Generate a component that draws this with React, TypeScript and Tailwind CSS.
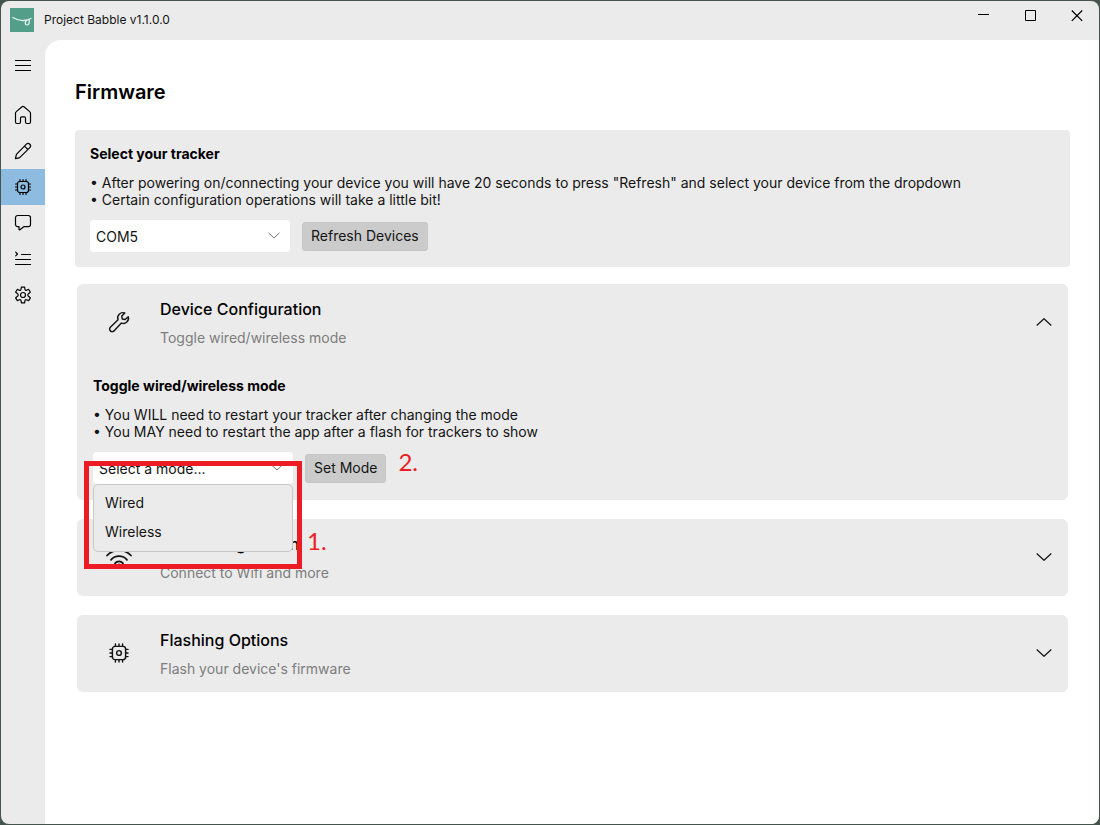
import React, { useState } from 'react'

type IconProps = { className?: string }

const Icon = ({ className = 'size-5', children }: IconProps & { children: React.ReactNode }) => (
  <svg
    viewBox="0 0 20 20"
    className={className}
    fill="none"
    stroke="currentColor"
    strokeWidth="1.2"
    strokeLinecap="round"
    strokeLinejoin="round"
    aria-hidden="true"
  >
    {children}
  </svg>
)

const HomeIcon = () => (
  <Icon>
    <path d="M9 1.7a1.6 1.6 0 0 1 2 0l5.7 4.9c.5.4.8 1 .8 1.7v8.7c0 .9-.6 1.5-1.5 1.5h-2c-.9 0-1.5-.6-1.5-1.5v-3.9c0-.8-.5-1.3-1.3-1.3H8.8c-.8 0-1.3.5-1.3 1.3V17c0 .9-.6 1.5-1.5 1.5H4c-.9 0-1.5-.6-1.5-1.5V8.300c0-.7.3-1.3.8-1.700z" />
  </Icon>
)

const PencilIcon = () => (
  <Icon>
    <path d="M13.4 3.2a2.3 2.3 0 0 1 3.4 3.4L7.2 16.2c-.3.3-.6.5-1 .6l-3.8.9.9-3.8c.1-.4.3-.7.6-1zM11.500 5.100l3.400 3.400" />
  </Icon>
)

const ChipIcon = ({ className }: IconProps) => (
  <Icon className={className}>
    <rect x="4.5" y="4.5" width="11" height="11" rx="2.2" />
    <circle cx="10" cy="10" r="2" />
    <path d="M7 4.500v-2M10 4.500v-2M13 4.500v-2M7 17.500v-2M10 17.500v-2M13 17.500v-2M4.500 7h-2M4.500 10h-2M4.500 13h-2M17.500 7h-2M17.500 10h-2M17.500 13h-2" />
  </Icon>
)

const ChatIcon = () => (
  <Icon>
    <path d="M4.700 2.500h10.600a2.200 2.200 0 0 1 2.200 2.200v6.800a2.200 2.200 0 0 1-2.200 2.200h-4.500l-3.900 3c-.4.300-.9 0-.9-.500v-2.500H4.700a2.200 2.200 0 0 1-2.200-2.200V4.700a2.200 2.200 0 0 1 2.200-2.200z" />
  </Icon>
)

const ConsoleIcon = () => (
  <Icon>
    <path d="M2.700 3.200 4.500 5 2.700 6.800M8.500 5.500h9M2.500 10.500h15M2.500 15.500h15" />
  </Icon>
)

const GearIcon = () => (
  <Icon>
    <path d="M8.400 2.200q1.600-.3 3.200 0l.4 2.200a1 1 0 0 0 1.500.8l2.100-.8q1.200 1.200 1.700 2.800l-1.800 1.500a1.600 1.600 0 0 0 0 2.600l1.800 1.500q-.5 1.600-1.700 2.800l-2.100-.8a1 1 0 0 0-1.500.8l-.4 2.200q-1.600.3-3.200 0L8 15.600a1 1 0 0 0-1.500-.8l-2.100.8q-1.200-1.200-1.700-2.800l1.800-1.500a1.600 1.600 0 0 0 0-2.600L2.700 7.200q.5-1.600 1.700-2.800l2.100.8A1 1 0 0 0 8 4.400z" />
    <circle cx="10" cy="10" r="2.500" />
  </Icon>
)

const WrenchIcon = () => (
  <Icon className="size-6">
    <path d="M17.700 5.600a4.300 4.300 0 0 1-5.700 5.300l-6.200 6.500a2 2 0 0 1-3-3L9.200 8.200a4.400 4.400 0 0 1 5.600-5.700l-2.500 2.600.4 2.400 2.400.4z" />
  </Icon>
)

const WifiIcon = () => (
  <svg viewBox="0 0 28 24" className="h-6 w-7" fill="none" stroke="currentColor" strokeWidth="1.800" strokeLinecap="round" aria-hidden="true">
    <path d="M2 10.500a16.500 16.500 0 0 1 24 0M6 14.800a10.700 10.700 0 0 1 16 0M10 18.300a5.200 5.200 0 0 1 8 0" />
    <circle cx="14" cy="20.500" r="1" fill="currentColor" />
  </svg>
)

const Chevron = ({ up = false, className = '' }: IconProps & { up?: boolean }) => (
  <svg viewBox="0 0 16 8" className={className} fill="none" stroke="currentColor" strokeWidth="1.200" aria-hidden="true">
    <path d={up ? 'M.700 7.500 8 .700l7.300 6.800' : 'M.700.500 8 7.300 15.300.500'} />
  </svg>
)

const navItems = [
  { label: 'Home', icon: <HomeIcon /> },
  { label: 'Calibration', icon: <PencilIcon /> },
  { label: 'Firmware', icon: <ChipIcon />, active: true },
  { label: 'Feedback', icon: <ChatIcon /> },
  { label: 'Output', icon: <ConsoleIcon /> },
  { label: 'Settings', icon: <GearIcon /> },
]

type SelectProps = { id: string; label: string; value: string; options: string[]; onChange?: (v: string) => void }

function Select({ id, label, value, options, onChange }: SelectProps) {
  return (
    <div className="relative">
      <select
        id={id}
        aria-label={label}
        value={value}
        onChange={(e) => onChange?.(e.target.value)}
        className="block h-8 w-[200px] appearance-none rounded bg-white pt-0.5 pr-8 pl-1.5"
      >
        {options.map((o) => (
          <option key={o}>{o}</option>
        ))}
      </select>
      <Chevron className="pointer-events-none absolute top-3 right-2.5 h-[7px] w-3 text-[#666]" />
    </div>
  )
}

function ActionButton({ children }: { children: React.ReactNode }) {
  return (
    <button type="button" className="h-[29px] rounded-[3px] border border-[#c6c6c6] bg-[#cbcbcb] px-2">
      {children}
    </button>
  )
}

type PanelProps = {
  icon: React.ReactNode
  title: string
  subtitle: string
  open?: boolean
  children?: React.ReactNode
}

function Panel({ icon, title, subtitle, open = false, children }: PanelProps) {
  return (
    <section className="rounded-md bg-[#ebebeb]">
      <button type="button" aria-expanded={open} className="flex h-[77px] w-full items-center pr-4 pb-0.5 text-left">
        <span className="flex w-[83px] justify-center">{icon}</span>
        <span className="flex flex-1 flex-col gap-2 pt-1">
          <span className="text-base leading-5 font-medium text-black">{title}</span>
          <span className="leading-[22px] text-[#7d7d7d]">{subtitle}</span>
        </span>
        <Chevron up={open} className="h-2 w-4" />
      </button>
      {children}
    </section>
  )
}

export default function App() {
  const [port, setPort] = useState('COM5')
  const [mode, setMode] = useState('Select a mode...')

  return (
    <div className="flex min-h-screen bg-[#46544e] p-px font-['Inter',sans-serif] text-sm text-[#141414]">
      <div className="flex flex-1 flex-col overflow-hidden rounded-lg bg-[#ebebeb]">
        <header className="flex h-[39px] items-start justify-between">
          <div className="flex items-center gap-2.5 pt-[7px] pl-[9px]">
            <svg viewBox="0 0 24 24" className="size-6" fill="none" stroke="#e4f1ec" strokeLinecap="round" aria-hidden="true">
              <rect width="24" height="24" fill="#529e89" stroke="none" />
              <path d="M2.800 9.500c3 2 7 3.200 11 3 2.600-.1 5-.8 7.200-2" strokeWidth="1.300" />
              <path d="M16.500 12.500c-1.500 1.500-2 4 .3 4.300 2.400.2 2.800-2 2.300-4.800" strokeWidth="1.300" />
            </svg>
            <span className="text-xs">Project Babble v1.1.0.0</span>
          </div>
          <div className="flex text-black">
            <button type="button" aria-label="Minimize" className="flex h-[29px] w-[47px] items-center justify-center">
              <svg viewBox="0 0 12 12" className="size-3" stroke="currentColor" aria-hidden="true">
                <path d="M0 4.500h11" />
              </svg>
            </button>
            <button type="button" aria-label="Maximize" className="flex h-[29px] w-[47px] items-center justify-center">
              <svg viewBox="0 0 12 12" className="size-3" fill="none" stroke="currentColor" aria-hidden="true">
                <path d="M.5.500h10v10H.5z" />
              </svg>
            </button>
            <button type="button" aria-label="Close" className="flex h-[29px] w-[45px] items-center justify-center">
              <svg viewBox="0 0 12 12" className="size-3" stroke="currentColor" strokeWidth="1.200" aria-hidden="true">
                <path d="M.8.500l10.400 10.400M11.200.500.800 10.900" />
              </svg>
            </button>
          </div>
        </header>

        <div className="flex flex-1">
          <nav className="w-11 pt-[7px] text-black">
            <button type="button" aria-label="Menu" className="mb-3.5 flex h-9 w-full items-center justify-center">
              <svg viewBox="0 0 16 12" className="h-3 w-4" stroke="currentColor" aria-hidden="true">
                <path d="M0 1.500h16M0 6.500h16M0 11.500h16" />
              </svg>
            </button>
            {navItems.map((item) => (
              <a
                key={item.label}
                href="#"
                aria-label={item.label}
                className={`flex h-9 items-center justify-center ${item.active ? 'bg-[#8ebbe0]' : ''}`}
              >
                {item.icon}
              </a>
            ))}
          </nav>

          <main className="flex-1 rounded-tl-2xl bg-white pt-[38px] pr-[29px] pl-[30px]">
            <h1 className="text-xl leading-7 font-semibold text-black">Firmware</h1>

            <section className="mt-6 rounded bg-[#ebebeb] px-[15px] pt-3.5 pb-[15px]">
              <h2 className="leading-5 font-bold text-black">Select your tracker</h2>
              <p className="mt-2.5 leading-[17px]">
                • After powering on/connecting your device you will have 20 seconds to press "Refresh" and select your
                device from the dropdown
                <br />• Certain configuration operations will take a little bit!
              </p>
              <div className="mt-3 flex items-center gap-3">
                <Select id="port" label="Tracker" value={port} options={['COM5']} onChange={setPort} />
                <ActionButton>Refresh Devices</ActionButton>
              </div>
            </section>

            <div className="mx-0.5 mt-[17px] flex flex-col gap-[19px]">
              <Panel icon={<WrenchIcon />} title="Device Configuration" subtitle="Toggle wired/wireless mode" open>
                <div className="px-4 pt-[15px] pb-4">
                  <h3 className="leading-5 font-bold text-black">Toggle wired/wireless mode</h3>
                  <p className="mt-2.5 leading-[17px]">
                    • You WILL need to restart your tracker after changing the mode
                    <br />• You MAY need to restart the app after a flash for trackers to show
                  </p>
                  <div className="mt-3 flex items-center gap-3">
                    <div className="relative">
                      <Select
                        id="mode"
                        label="Mode"
                        value={mode}
                        options={['Select a mode...', 'Wired', 'Wireless']}
                        onChange={setMode}
                      />
                      <ul
                        role="listbox"
                        aria-label="Mode"
                        className="absolute top-full left-0 z-10 w-full rounded-[5px] border border-[#c8c8c8] bg-[#ebebeb] pt-[3px] pb-[5px]"
                      >
                        {['Wired', 'Wireless'].map((m) => (
                          <li
                            key={m}
                            role="option"
                            aria-selected={mode === m}
                            onClick={() => setMode(m)}
                            className="px-[11px] leading-[29px]"
                          >
                            {m}
                          </li>
                        ))}
                      </ul>
                      {/* step 1 callout */}
                      <div className="pointer-events-none absolute top-[9px] -left-[9px] z-20 h-[108px] w-[218px] border-[5px] border-[#ed1c24]" />
                      <span className="absolute top-[75px] left-[214px] z-20 font-['Lato',sans-serif] text-2xl leading-7 text-[#ed1c24]">
                        1.
                      </span>
                    </div>
                    <ActionButton>Set Mode</ActionButton>
                    <span className="-mt-3 font-['Lato',sans-serif] text-2xl leading-6 text-[#ed1c24]">2.</span>
                  </div>
                </div>
              </Panel>
              <Panel icon={<WifiIcon />} title="Wifi Configuration" subtitle="Connect to Wifi and more" />
              <Panel
                icon={<ChipIcon className="size-6" />}
                title="Flashing Options"
                subtitle="Flash your device's firmware"
              />
            </div>
          </main>
        </div>
      </div>
    </div>
  )
}
